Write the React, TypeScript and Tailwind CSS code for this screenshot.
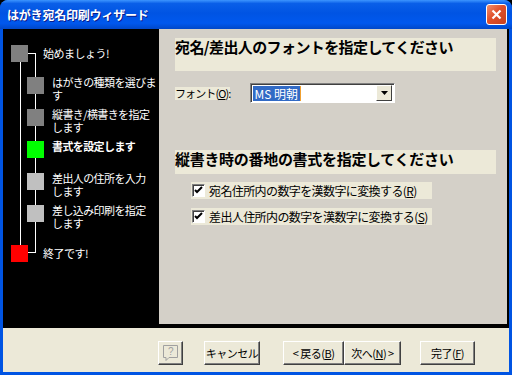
import React from "react";

const jp = "font-['Noto_Sans_CJK_JP','Noto_Sans',sans-serif]";

const steps = [
  { color: "bg-[#808080]", lines: ["はがきの種類を選びま", "す"] },
  { color: "bg-[#808080]", lines: ["縦書き/横書きを指定", "します"] },
  { color: "bg-[#00ff00]", lines: ["書式を設定します"], bold: true },
  { color: "bg-[#c0c0c0]", lines: ["差出人の住所を入力", "します"] },
  { color: "bg-[#c0c0c0]", lines: ["差し込み印刷を指定", "します"] },
];

const Btn = ({ className, children }: { className: string; children: React.ReactNode }) => (
  <div
    className={`h-[24px] flex items-center justify-center whitespace-pre bg-[#ece9d8] border border-t-white border-l-white border-b-[#404040] border-r-[#404040] shadow-[inset_-1px_-1px_0_#808080] text-[11px] tracking-[-0.5px] text-black ${className}`}
  >
    {children}
  </div>
);

const Check = ({ label, hot }: { label: string; hot: string }) => (
  <div className="flex items-center h-[17px] w-[241px] bg-[#ece9d8] pl-[1px]">
    <div className="w-[13px] h-[13px] bg-white border border-t-[#808080] border-l-[#808080] border-b-white border-r-white shadow-[inset_1px_1px_0_#404040] flex items-center justify-center">
      <svg width="9" height="9" viewBox="0 0 9 9">
        <polyline points="1,4 3,6 8,1" fill="none" stroke="black" strokeWidth="2" />
      </svg>
    </div>
    <span className="ml-[4px] text-[12px] tracking-[-0.6px] leading-none whitespace-nowrap">
      {label}(<u>{hot}</u>)
    </span>
  </div>
);

export default function App() {
  return (
    <div className={`w-[512px] h-[375px] bg-black ${jp}`}>
      <div className="w-[512px] h-[375px] flex flex-col rounded-t-[8px] overflow-hidden bg-[#0054e3]">
        {/* title bar */}
        <div className="h-[29px] shrink-0 flex items-center justify-between pl-[7px] pr-[5px] bg-[linear-gradient(to_bottom,#3d95ff_0%,#0a5fe8_12%,#0054e3_45%,#0058ee_80%,#0047c8_100%)]">
          <span className="text-white font-bold text-[12px] tracking-[-0.2px] [text-shadow:1px_1px_#0a1c8a]">
            はがき宛名印刷ウィザード
          </span>
          <div className="w-[21px] h-[21px] rounded-[3px] border border-white bg-[linear-gradient(to_bottom_right,#f0906e,#e0502a_45%,#c8401f)] flex items-center justify-center">
            <svg width="11" height="11" viewBox="0 0 11 11">
              <path d="M1.5 1.5 L9.5 9.5 M9.5 1.5 L1.5 9.5" stroke="white" strokeWidth="2.2" />
            </svg>
          </div>
        </div>

        <div className="flex-1 flex flex-col px-[3px] pb-[3px]">
          <div className="h-[299px] bg-black flex">
            {/* step tree */}
            <div className="relative w-[156px] h-full text-white">
              <div className="absolute left-[17px] top-[33px] w-px h-[183px] bg-white" />
              <div className="absolute left-[32px] top-[24px] w-px h-[200px] bg-white" />
              <div className="absolute left-[25px] top-[24px] w-[8px] h-px bg-white" />
              <div className="absolute left-[25px] top-[223px] w-[8px] h-px bg-white" />
              <div className="relative flex flex-col pl-[8px] pt-[16px]">
                <div className="flex items-center h-[17px]">
                  <div className="w-[17px] h-[17px] bg-[#808080]" />
                  <span className="ml-[15px] text-[11px] tracking-[-0.5px] leading-[13px]">始めましょう!</span>
                </div>
                <div className="flex flex-col ml-[16px] mt-[15px] gap-[15px]">
                  {steps.map((s, i) => (
                    <div key={i} className="flex items-start h-[17px]">
                      <div className={`w-[17px] h-[17px] shrink-0 ${s.color}`} />
                      <div
                        className={`ml-[8px] -mt-[1px] text-[11px] leading-[13px] tracking-[-0.6px] whitespace-nowrap ${s.bold ? "font-bold" : ""}`}
                      >
                        {s.lines.map((l, j) => (
                          <div key={j}>{l}</div>
                        ))}
                      </div>
                    </div>
                  ))}
                </div>
                <div className="flex items-center h-[17px] mt-[23px]">
                  <div className="w-[17px] h-[17px] bg-[#ff0000]" />
                  <span className="ml-[15px] text-[11px] tracking-[-0.5px] leading-[13px]">終了です!</span>
                </div>
              </div>
            </div>

            {/* page */}
            <div className="w-[348px] h-[295px] bg-[#d4d0c8] flex flex-col pl-[16px] pt-[9px] text-black">
              <div className="w-[321px] h-[33px] bg-[#ece9d8] text-[15px] font-bold tracking-[-0.6px] leading-[18px]">
                宛名/差出人のフォントを指定してください
              </div>
              <div className="flex items-center mt-[12px] h-[20px]">
                <span className="bg-[#ece9d8] text-[11px] tracking-[-0.9px] leading-[13px] whitespace-nowrap">
                  フォント(<u>O</u>):
                </span>
                <div className="ml-[20px] w-[145px] h-[20px] bg-white border border-t-[#808080] border-l-[#808080] border-b-white border-r-white shadow-[inset_1px_1px_0_#404040] flex items-center pl-[2px] pr-[2px]">
                  <span className="bg-[#316ac5] text-white text-[12px] leading-[15px] px-[1px] pr-[2px] border-r border-[#f0a030] whitespace-nowrap">
                    MS 明朝
                  </span>
                  <div className="ml-auto w-[16px] h-[16px] bg-[#ece9d8] border border-t-white border-l-white border-b-[#404040] border-r-[#404040] flex items-center justify-center">
                    <svg width="7" height="4" viewBox="0 0 7 4">
                      <polygon points="0,0 7,0 3.5,4" fill="black" />
                    </svg>
                  </div>
                </div>
              </div>
              <div className="w-[321px] h-[24px] mt-[47px] bg-[#ece9d8] text-[15px] font-bold tracking-[-0.3px] leading-[18px]">
                縦書き時の番地の書式を指定してください
              </div>
              <div className="flex flex-col ml-[16px] mt-[8px] gap-[9px]">
                <Check label="宛名住所内の数字を漢数字に変換する" hot="R" />
                <Check label="差出人住所内の数字を漢数字に変換する" hot="S" />
              </div>
            </div>
          </div>

          {/* buttons */}
          <div className="flex-1 bg-[#ece9d8] flex items-start pt-[13px]">
            <Btn className="ml-[155px] w-[25px]">
              <svg width="17" height="18" viewBox="0 0 17 18">
                <path d="M1.5 1.5 H15.5 V13.5 H7 L4 16.5 V13.5 H1.5 Z" fill="none" stroke="#a0a0a0" />
                <text x="8.5" y="11" fontSize="10" textAnchor="middle" fill="#a0a0a0" fontFamily="Liberation Sans">?</text>
              </svg>
            </Btn>
            <Btn className="ml-[21px] w-[56px]">キャンセル</Btn>
            <Btn className="ml-[23px] w-[61px]">
              {"< 戻る("}<u>B</u>{")"}
            </Btn>
            <Btn className="w-[57px]">
              {"次へ("}<u>N</u>{") >"}
            </Btn>
            <Btn className="ml-[19px] w-[55px]">
              {"完了("}<u>F</u>{")"}
            </Btn>
          </div>
        </div>
      </div>
    </div>
  );
}
